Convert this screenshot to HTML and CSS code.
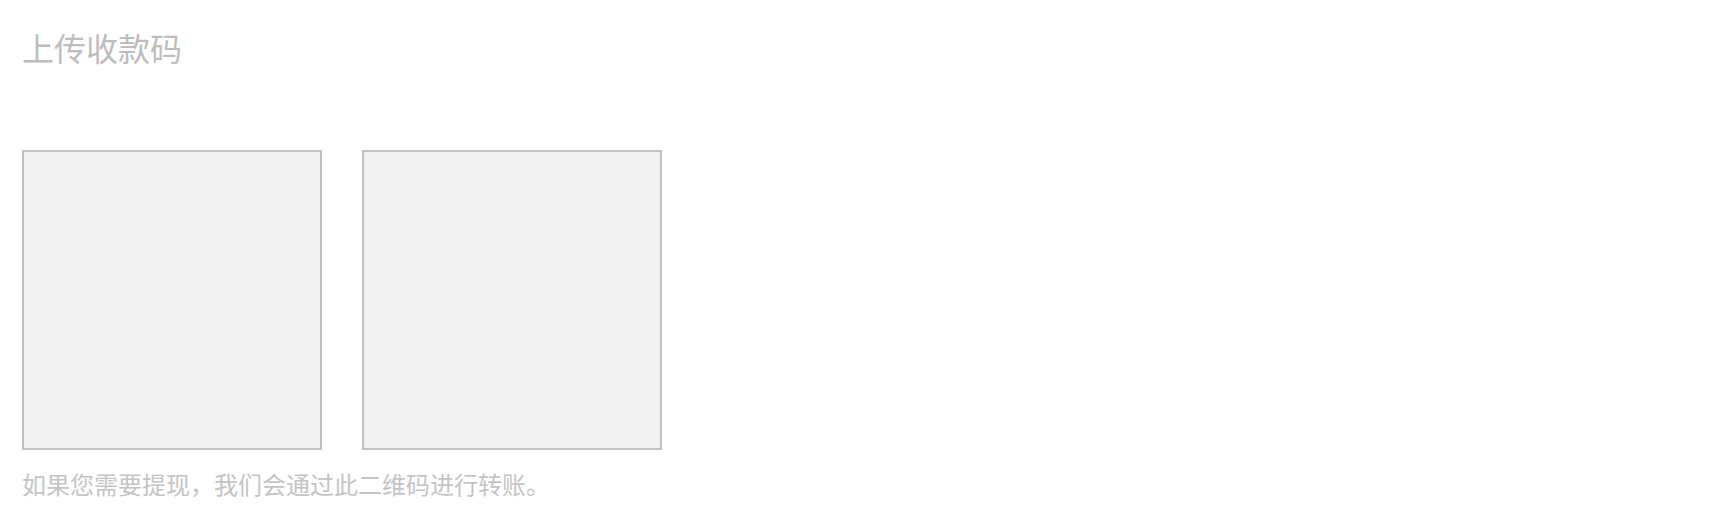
FILE: index.html
```html
<!DOCTYPE html>
<html lang="zh-CN">

<head>
    <meta charset="utf-8">
    <link rel="stylesheet" href="styles.css">
</head>

<body>
    <div class="qr-upload">
        <h2 class="qr-title">上传收款码</h2>
        <div class="qr-slots">
            <div class="qr-slot"></div>
            <div class="qr-slot"></div>
        </div>
        <p class="qr-tip">如果您需要提现，我们会通过此二维码进行转账。</p>
    </div>
</body>

</html>
```

FILE: styles.css
```css
body {
    background: #fff;
    margin: 0;
    font-family: "Noto Sans CJK SC", "Noto Sans", sans-serif;
}

.qr-upload {
    padding: 0 22px;
}

.qr-title {
    font-size: 32px;
    font-weight: normal;
    line-height: 40px;
    color: #bdbdbd;
    margin: 0;
    padding-top: 27px;
}

.qr-slots {
    display: flex;
    gap: 40px;
    margin-top: 83px;
}

.qr-slot {
    box-sizing: border-box;
    width: 300px;
    height: 300px;
    background: #f2f2f2;
    border: 2px solid #c2c2c2;
}

.qr-tip {
    font-size: 24px;
    line-height: 32px;
    color: #c4c4c4;
    margin: 18px 0 0;
}
```
